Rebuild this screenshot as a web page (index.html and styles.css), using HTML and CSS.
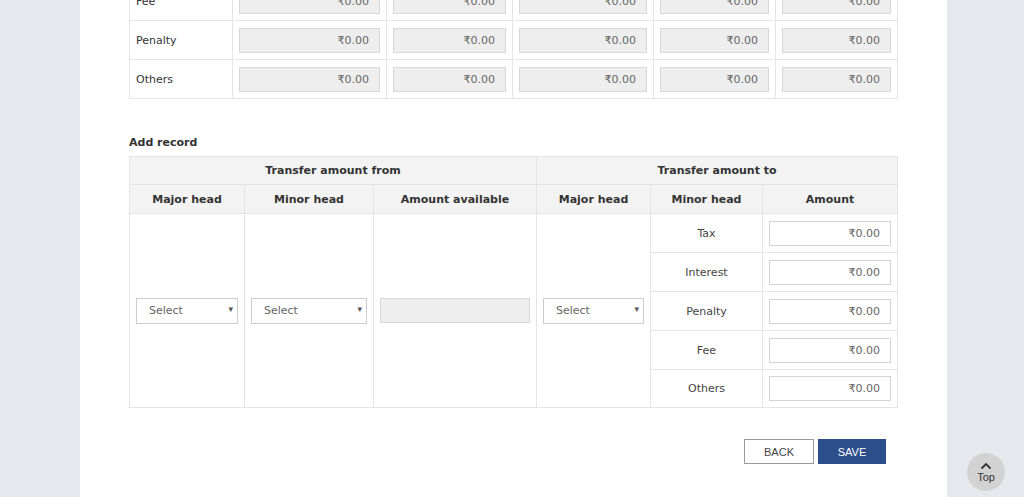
FILE: index.html
```html
<!DOCTYPE html>
<html>

<head>
    <title>Transfer of Cash Ledger</title>
    <link rel="stylesheet" href="styles.css">
</head>

<body>

    <div class="page">

        <table class="grid ledger">
            <colgroup>
                <col style="width:103px"><col style="width:154px"><col style="width:126px">
                <col style="width:141px"><col style="width:122px"><col style="width:122px">
            </colgroup>
            <tr>
                <td class="label">Fee</td>
                <td><input class="amount" type="text" value="₹0.00" disabled></td>
                <td><input class="amount" type="text" value="₹0.00" disabled></td>
                <td><input class="amount" type="text" value="₹0.00" disabled></td>
                <td><input class="amount" type="text" value="₹0.00" disabled></td>
                <td><input class="amount" type="text" value="₹0.00" disabled></td>
            </tr>
            <tr>
                <td class="label">Penalty</td>
                <td><input class="amount" type="text" value="₹0.00" disabled></td>
                <td><input class="amount" type="text" value="₹0.00" disabled></td>
                <td><input class="amount" type="text" value="₹0.00" disabled></td>
                <td><input class="amount" type="text" value="₹0.00" disabled></td>
                <td><input class="amount" type="text" value="₹0.00" disabled></td>
            </tr>
            <tr>
                <td class="label">Others</td>
                <td><input class="amount" type="text" value="₹0.00" disabled></td>
                <td><input class="amount" type="text" value="₹0.00" disabled></td>
                <td><input class="amount" type="text" value="₹0.00" disabled></td>
                <td><input class="amount" type="text" value="₹0.00" disabled></td>
                <td><input class="amount" type="text" value="₹0.00" disabled></td>
            </tr>
        </table>

        <h4 class="section-title">Add record</h4>

        <table class="grid record">
            <colgroup>
                <col style="width:115px"><col style="width:129px"><col style="width:163px">
                <col style="width:114px"><col style="width:112px"><col style="width:135px">
            </colgroup>
            <tr class="head-top">
                <th colspan="3">Transfer amount from</th>
                <th colspan="3">Transfer amount to</th>
            </tr>
            <tr class="head-sub">
                <th>Major head</th>
                <th>Minor head</th>
                <th>Amount available</th>
                <th>Major head</th>
                <th>Minor head</th>
                <th>Amount</th>
            </tr>
            <tr>
                <td rowspan="5">
                    <span class="select-wrap"><select><option>Select</option></select></span>
                </td>
                <td rowspan="5">
                    <span class="select-wrap"><select><option>Select</option></select></span>
                </td>
                <td rowspan="5"><input class="amount" type="text" value="" disabled></td>
                <td rowspan="5">
                    <span class="select-wrap"><select><option>Select</option></select></span>
                </td>
                <td class="minor">Tax</td>
                <td><input class="amount editable" type="text" value="₹0.00"></td>
            </tr>
            <tr>
                <td class="minor">Interest</td>
                <td><input class="amount editable" type="text" value="₹0.00"></td>
            </tr>
            <tr>
                <td class="minor">Penalty</td>
                <td><input class="amount editable" type="text" value="₹0.00"></td>
            </tr>
            <tr>
                <td class="minor">Fee</td>
                <td><input class="amount editable" type="text" value="₹0.00"></td>
            </tr>
            <tr class="last">
                <td class="minor">Others</td>
                <td><input class="amount editable" type="text" value="₹0.00"></td>
            </tr>
        </table>

        <div class="actions">
            <button class="btn btn-back">BACK</button>
            <button class="btn btn-save">SAVE</button>
        </div>

    </div>

    <a class="to-top" href="#">
        <svg width="12" height="8" viewBox="0 0 12 8"><path d="M1.5 6.5 L6 2 L10.5 6.5" fill="none" stroke="#333" stroke-width="1.8"/></svg>
        <span>Top</span>
    </a>

</body>

</html>
```

FILE: styles.css
```css
body {
    margin: 0;
    background-color: #e5e8ec;
    font-family: "DejaVu Sans", Verdana, sans-serif;
    font-size: 11px;
    color: #333;
}

.page {
    background-color: #fff;
    width: 768px;
    margin-left: 80px;
    padding: 0 50px 40px 49px;
}

.grid {
    border-collapse: collapse;
    table-layout: fixed;
    width: 768px;
}

.grid td,
.grid th {
    border: 1px solid #e4e4e4;
    padding: 0 6px;
}

.ledger {
    margin-top: -19px;
}

.ledger td {
    height: 38px;
}

.ledger td.label {
    padding-left: 6px;
}

.amount {
    display: block;
    width: 100%;
    height: 25px;
    box-sizing: border-box;
    border: 1px solid #d8d8d8;
    background-color: #eee;
    color: #666;
    font-family: "DejaVu Sans", Verdana, sans-serif;
    font-size: 11px;
    text-align: right;
    padding: 0 10px;
    margin: 0;
}

.amount.editable {
    background-color: #fff;
    border-color: #d4d4d4;
}

.section-title {
    font-size: 11px;
    font-weight: bold;
    margin: 37px 0 7px 0;
}

.record th {
    background-color: #f3f3f3;
    font-weight: bold;
    text-align: center;
}

.record .head-top th {
    height: 27px;
}

.record .head-sub th {
    height: 28px;
}

.record td {
    height: 38px;
    text-align: center;
    vertical-align: middle;
}

.record tr.last td {
    height: 37px;
}

.record td.minor {
    color: #444;
}

.select-wrap {
    position: relative;
    display: block;
}

.select-wrap select {
    display: block;
    width: 100%;
    height: 26px;
    box-sizing: border-box;
    border: 1px solid #ccc;
    background-color: #fff;
    color: #666;
    font-family: "DejaVu Sans", Verdana, sans-serif;
    font-size: 11px;
    padding: 0 12px;
    -webkit-appearance: none;
    appearance: none;
    border-radius: 0;
}

.select-wrap::after {
    content: "\25BE";
    position: absolute;
    right: 5px;
    top: 6px;
    font-size: 9px;
    color: #555;
    pointer-events: none;
}

.actions {
    display: flex;
    justify-content: flex-end;
    gap: 4px;
    margin-top: 31px;
    padding-right: 11px;
}

.btn {
    height: 25px;
    font-family: "Liberation Sans", Arial, sans-serif;
    font-size: 11px;
    border-radius: 0;
    cursor: pointer;
}

.btn-back {
    width: 70px;
    background-color: #fff;
    border: 1px solid #9a9a9a;
    color: #444;
}

.btn-save {
    width: 68px;
    background-color: #2c4f8c;
    border: 1px solid #2c4f8c;
    color: #fff;
}

.to-top {
    position: fixed;
    left: 967px;
    top: 453px;
    width: 38px;
    height: 38px;
    border-radius: 50%;
    background-color: #d2d2d2;
    display: flex;
    flex-direction: column;
    align-items: center;
    justify-content: center;
    text-decoration: none;
    color: #333;
    font-family: "Liberation Sans", Arial, sans-serif;
    font-size: 11px;
    line-height: 11px;
}

.to-top svg {
    margin-bottom: 2px;
}
```
